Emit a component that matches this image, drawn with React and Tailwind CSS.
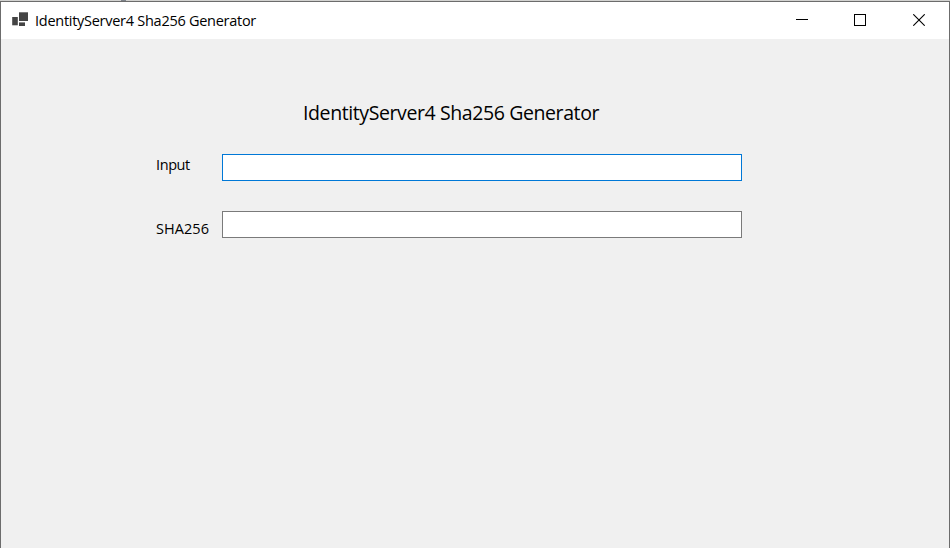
function AppIcon() {
  return (
    <svg className="mb-px block h-4 w-4" viewBox="0 0 16 16" fill="#444444">
      <rect x="7" y="0.3" width="9" height="8.7" />
      <rect x="0.2" y="5" width="5.6" height="8.3" />
      <rect x="7" y="10.4" width="6" height="3.6" />
    </svg>
  );
}

function TitleBar() {
  return (
    <header className="flex h-[37px] shrink-0 items-center bg-white pl-[11px]">
      <AppIcon />
      <h1 className="ml-[7px] flex-1 whitespace-nowrap text-[14.5px] leading-[20px] tracking-[-0.27px]">
        IdentityServer4 Sha256 Generator
      </h1>
      <button className="flex h-full w-[58px] items-center justify-center" aria-label="Minimize">
        <svg className="mb-px block h-3 w-3" viewBox="0 0 12 12" stroke="#000" shapeRendering="crispEdges">
          <path d="M0 5.5h12" />
        </svg>
      </button>
      <button className="flex h-full w-[58px] items-center justify-center" aria-label="Maximize">
        <svg className="mb-px block h-3 w-3" viewBox="0 0 12 12" fill="none" stroke="#000" shapeRendering="crispEdges">
          <path d="M.5.5h11v11H.5z" />
        </svg>
      </button>
      <button className="flex h-full w-[60px] items-center justify-center" aria-label="Close">
        <svg className="mb-px block h-3 w-3" viewBox="0 0 12 12" fill="none" stroke="#000" strokeWidth="1.1">
          <path d="M.3.3l11.4 11.4M11.7.3L.3 11.7" />
        </svg>
      </button>
    </header>
  );
}

export default function App() {
  return (
    <div className="flex h-[548px] w-[950px] flex-col overflow-hidden bg-[#d2d2d0] font-['Open_Sans','Noto_Sans',sans-serif] text-black">
      <div className="h-px shrink-0 pl-[121px]">
        <div className="h-px w-[5px] bg-[#7d828a]" />
      </div>
      <div className="flex flex-1 flex-col border-x border-t border-[#6c6c6c] bg-[#f0f0f0]">
        <TitleBar />
        <main className="pl-[155px] pt-[60px]">
          <h2 className="ml-[147px] whitespace-nowrap text-[19.5px] leading-[28px] tracking-[-0.4px]">
            IdentityServer4 Sha256 Generator
          </h2>
          <div className="mt-[27px] flex">
            <label htmlFor="plain" className="w-[66px] text-[14.5px] leading-[22px] tracking-[-0.4px]">
              Input
            </label>
            <input id="plain" className="h-[27px] w-[520px] border border-[#0078d7] bg-white px-1 text-[14px] outline-none" />
          </div>
          <div className="mt-[30px] flex">
            <label htmlFor="hash" className="w-[66px] pt-[7px] text-[14.5px] leading-[22px] tracking-[0.05px]">
              SHA256
            </label>
            <input id="hash" className="h-[27px] w-[520px] border border-[#7a7a7a] bg-white px-1 text-[14px] outline-none" />
          </div>
        </main>
      </div>
    </div>
  );
}
